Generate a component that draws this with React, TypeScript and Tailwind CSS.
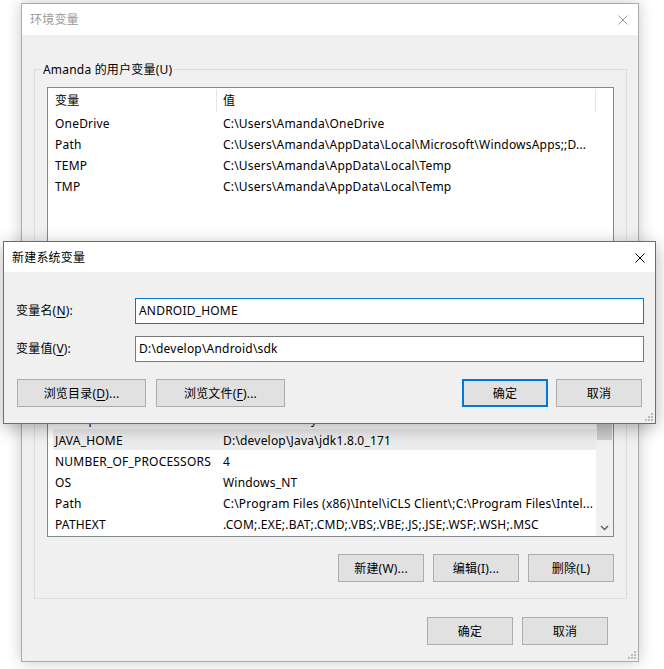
import React from "react";

type Row = { name: string; value: string; selected?: boolean };

const userRows: Row[] = [
  { name: "OneDrive", value: "C:\\Users\\Amanda\\OneDrive" },
  { name: "Path", value: "C:\\Users\\Amanda\\AppData\\Local\\Microsoft\\WindowsApps;;D..." },
  { name: "TEMP", value: "C:\\Users\\Amanda\\AppData\\Local\\Temp" },
  { name: "TMP", value: "C:\\Users\\Amanda\\AppData\\Local\\Temp" },
];

const systemRows: Row[] = [
  { name: "asl.log", value: "Destination=file" },
  { name: "CLASSPATH", value: ".;%JAVA_HOME%\\lib;%JAVA_HOME%\\lib\\tools.jar" },
  { name: "ComSpec", value: "C:\\WINDOWS\\system32\\cmd.exe" },
  { name: "JAVA_HOME", value: "D:\\develop\\Java\\jdk1.8.0_171", selected: true },
  { name: "NUMBER_OF_PROCESSORS", value: "4" },
  { name: "OS", value: "Windows_NT" },
  { name: "Path", value: "C:\\Program Files (x86)\\Intel\\iCLS Client\\;C:\\Program Files\\Intel..." },
  { name: "PATHEXT", value: ".COM;.EXE;.BAT;.CMD;.VBS;.VBE;.JS;.JSE;.WSF;.WSH;.MSC" },
];

function CloseIcon({ color }: { color: string }) {
  return (
    <svg width="10" height="10" viewBox="0 0 10 10">
      <path d="M0.5 0.5 L9.5 9.5 M9.5 0.5 L0.5 9.5" stroke={color} strokeWidth="1" fill="none" />
    </svg>
  );
}

function Grip() {
  return (
    <svg className="absolute right-[2px] bottom-[2px]" width="8" height="8" viewBox="0 0 8 8">
      {[
        [6, 0],
        [3, 3],
        [6, 3],
        [0, 6],
        [3, 6],
        [6, 6],
      ].map(([x, y]) => (
        <rect key={`${x}-${y}`} x={x} y={y} width="2" height="2" fill="#bdbdbd" />
      ))}
    </svg>
  );
}

function Btn({
  children,
  width = "w-[86px]",
  primary = false,
}: {
  children: React.ReactNode;
  width?: string;
  primary?: boolean;
}) {
  return (
    <div
      className={`${width} h-[28px] shrink-0 flex items-center justify-center pt-[1px] bg-[#e1e1e1] ${
        primary ? "border-2 border-[#0078d7]" : "border border-[#adadad]"
      }`}
    >
      <span>{children}</span>
    </div>
  );
}

function Header({ colWidth }: { colWidth: string }) {
  return (
    <div className="h-[24px] shrink-0 flex">
      <div className="w-[168px] pl-[7px] pt-[1px] flex items-center">变量</div>
      <div className="w-px mt-[1px] bg-[#e5e5e5]" />
      <div className={`${colWidth} pl-[6px] pt-[1px] flex items-center`}>值</div>
      <div className="w-px mt-[1px] bg-[#e5e5e5]" />
    </div>
  );
}

function Rows({ rows }: { rows: Row[] }) {
  return (
    <div className="flex flex-col">
      {rows.map((r) => (
        <div
          key={r.name + r.value}
          className={`ml-[5px] w-[543px] h-[21px] shrink-0 flex items-center pt-[2px] whitespace-nowrap ${
            r.selected ? "bg-[#ececec]" : ""
          }`}
        >
          <div className="w-[168px] pl-[2px]">{r.name}</div>
          <div className="pl-[2px]">{r.value}</div>
        </div>
      ))}
    </div>
  );
}

export default function App() {
  return (
    <div className="relative w-[664px] h-[669px] overflow-hidden bg-white text-[12px] leading-[16px] tracking-[0.2px] text-black font-['Noto_Sans','Noto_Sans_CJK_SC',sans-serif]">
      {/* 环境变量 (inactive, behind) */}
      <div className="relative ml-[21px] mt-[3px] w-[618px] h-[659px] flex flex-col border border-[#aaaaaa] bg-[#f0f0f0] shadow-[0_0_14px_rgba(0,0,0,0.22)]">
        <div className="h-[31px] shrink-0 bg-white flex items-center justify-between pl-[8px] pr-[10px]">
          <span className="text-[#999999]">环境变量</span>
          <CloseIcon color="#999999" />
        </div>

        <div className="flex flex-col pt-[26px] pl-[12px]">
          <fieldset className="w-[592px] border border-[#dcdcdc] p-0 m-0">
            <legend className="ml-[6px] px-[2px] pt-[1px] leading-[16px]">Amanda 的用户变量(U)</legend>
            <div className="flex flex-col pt-[9px] px-[12px] pb-[16px]">
              <div className="w-[567px] h-[164px] border border-[#828790] bg-white flex flex-col overflow-hidden">
                <Header colWidth="w-[378px]" />
                <Rows rows={userRows} />
              </div>
              <div className="mt-[17px] flex justify-end gap-[9px]">
                <Btn>新建(N)...</Btn>
                <Btn>编辑(E)...</Btn>
                <Btn>删除(D)</Btn>
              </div>
            </div>
          </fieldset>

          <fieldset className="mt-[2px] w-[592px] border border-[#dcdcdc] p-0 m-0">
            <legend className="ml-[6px] px-[2px] pt-[1px] leading-[16px]">系统变量(S)</legend>
            <div className="flex flex-col pt-[9px] px-[12px] pb-[16px]">
              <div className="w-[567px] h-[196px] border border-[#828790] bg-white flex overflow-hidden">
                <div className="w-[548px] flex flex-col overflow-hidden">
                  <Header colWidth="w-[378px]" />
                  <Rows rows={systemRows} />
                </div>
                <div className="w-[17px] flex flex-col bg-[#f0f0f0]">
                  <div className="h-[17px] flex items-center justify-center">
                    <svg width="9" height="6" viewBox="0 0 9 6">
                      <path d="M1 5 L4.5 1.5 L8 5" stroke="#606060" strokeWidth="1.5" fill="none" />
                    </svg>
                  </div>
                  <div className="mx-[1px] h-[81px] bg-[#cdcdcd]" />
                  <div className="flex-1" />
                  <div className="h-[17px] flex items-center justify-center">
                    <svg width="9" height="6" viewBox="0 0 9 6">
                      <path d="M1 1 L4.5 4.5 L8 1" stroke="#606060" strokeWidth="1.5" fill="none" />
                    </svg>
                  </div>
                </div>
              </div>
              <div className="mt-[17px] flex justify-end gap-[9px]">
                <Btn>新建(W)...</Btn>
                <Btn>编辑(I)...</Btn>
                <Btn>删除(L)</Btn>
              </div>
            </div>
          </fieldset>

          <div className="mt-[18px] pr-[30px] flex justify-end gap-[9px]">
            <Btn>确定</Btn>
            <Btn>取消</Btn>
          </div>
        </div>
        <Grip />
      </div>

      {/* 新建系统变量 (active, on top) */}
      <div className="absolute left-[3px] top-[241px] w-[653px] h-[183px] flex flex-col border border-[#1883d7] bg-[#f0f0f0] shadow-[0_4px_16px_rgba(0,0,0,0.3)]">
        <div className="h-[30px] shrink-0 bg-white flex items-center justify-between pl-[8px] pr-[10px] pt-[1px]">
          <span>新建系统变量</span>
          <CloseIcon color="#000000" />
        </div>
        <div className="flex flex-col pt-[26px] pl-[12px] pr-[11px]">
          <div className="h-[26px] flex items-center">
            <div className="w-[119px]">
              变量名(<span className="underline underline-offset-2">N</span>):
            </div>
            <div className="flex-1 h-[26px] border border-[#0078d7] bg-white flex items-center pl-[3px]">
              ANDROID_HOME
            </div>
          </div>
          <div className="mt-[12px] h-[26px] flex items-center">
            <div className="w-[119px]">
              变量值(<span className="underline underline-offset-2">V</span>):
            </div>
            <div className="flex-1 h-[26px] border border-[#7a7a7a] bg-white flex items-center pl-[3px]">
              D:\develop\Android\sdk
            </div>
          </div>
          <div className="mt-[17px] pl-[1px] pr-[2px] flex">
            <Btn width="w-[129px]">
              浏览目录(<span className="underline underline-offset-2">D</span>)...
            </Btn>
            <div className="ml-[10px]">
              <Btn width="w-[129px]">
                浏览文件(<span className="underline underline-offset-2">F</span>)...
              </Btn>
            </div>
            <div className="flex-1" />
            <Btn primary>确定</Btn>
            <div className="ml-[8px]">
              <Btn>取消</Btn>
            </div>
          </div>
        </div>
        <Grip />
      </div>
    </div>
  );
}
